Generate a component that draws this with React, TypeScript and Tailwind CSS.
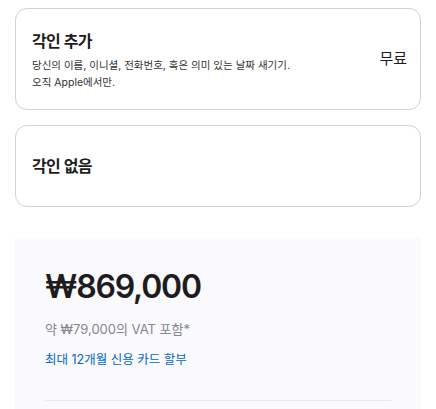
import React from 'react';

const font = { fontFamily: '"Inter", "Noto Sans CJK KR", sans-serif' };

export default function App() {
  return (
    <div className="w-[436px] h-[409px] overflow-hidden bg-white px-[15px] pt-[8px] text-[#1d1d1f]" style={font}>
      <div className="flex flex-col gap-[15px]">
        {/* 각인 추가 */}
        <div className="h-[102px] rounded-[12px] border border-[#d2d2d7] flex items-center justify-between pl-[16px] pr-[13px]">
          <div className="flex flex-col pt-[2px]">
            <div className="text-[16px] font-semibold leading-[22px] tracking-[-0.6px]">각인 추가</div>
            <div className="mt-[5px] text-[10.5px] leading-[17px] text-[#333336]">
              당신의 이름, 이니셜, 전화번호, 혹은 의미 있는 날짜 새기기.
              <br />
              오직 Apple에서만.
            </div>
          </div>
          <div className="text-[15px] leading-[20px]">무료</div>
        </div>

        {/* 각인 없음 */}
        <div className="h-[82px] rounded-[12px] border border-[#d2d2d7] flex items-center pl-[16px]">
          <div className="text-[16px] font-semibold leading-[22px] tracking-[-0.6px]">각인 없음</div>
        </div>
      </div>

      {/* 가격 */}
      <div className="mt-[31px] bg-[#fafafc] h-[200px] px-[30px] pt-[30px]">
        <div className="text-[32px] font-semibold leading-[38px] tracking-[-1.2px]">₩869,000</div>
        <div className="mt-[14px] text-[13px] leading-[18px] text-[#86868b]">약 ₩79,000의 VAT 포함*</div>
        <div className="mt-[13px] text-[12.5px] leading-[18px] text-[#0066cc]">최대 12개월 신용 카드 할부</div>
        <div className="mt-[31px] h-px bg-[#e8e8ed]" />
      </div>
    </div>
  );
}
